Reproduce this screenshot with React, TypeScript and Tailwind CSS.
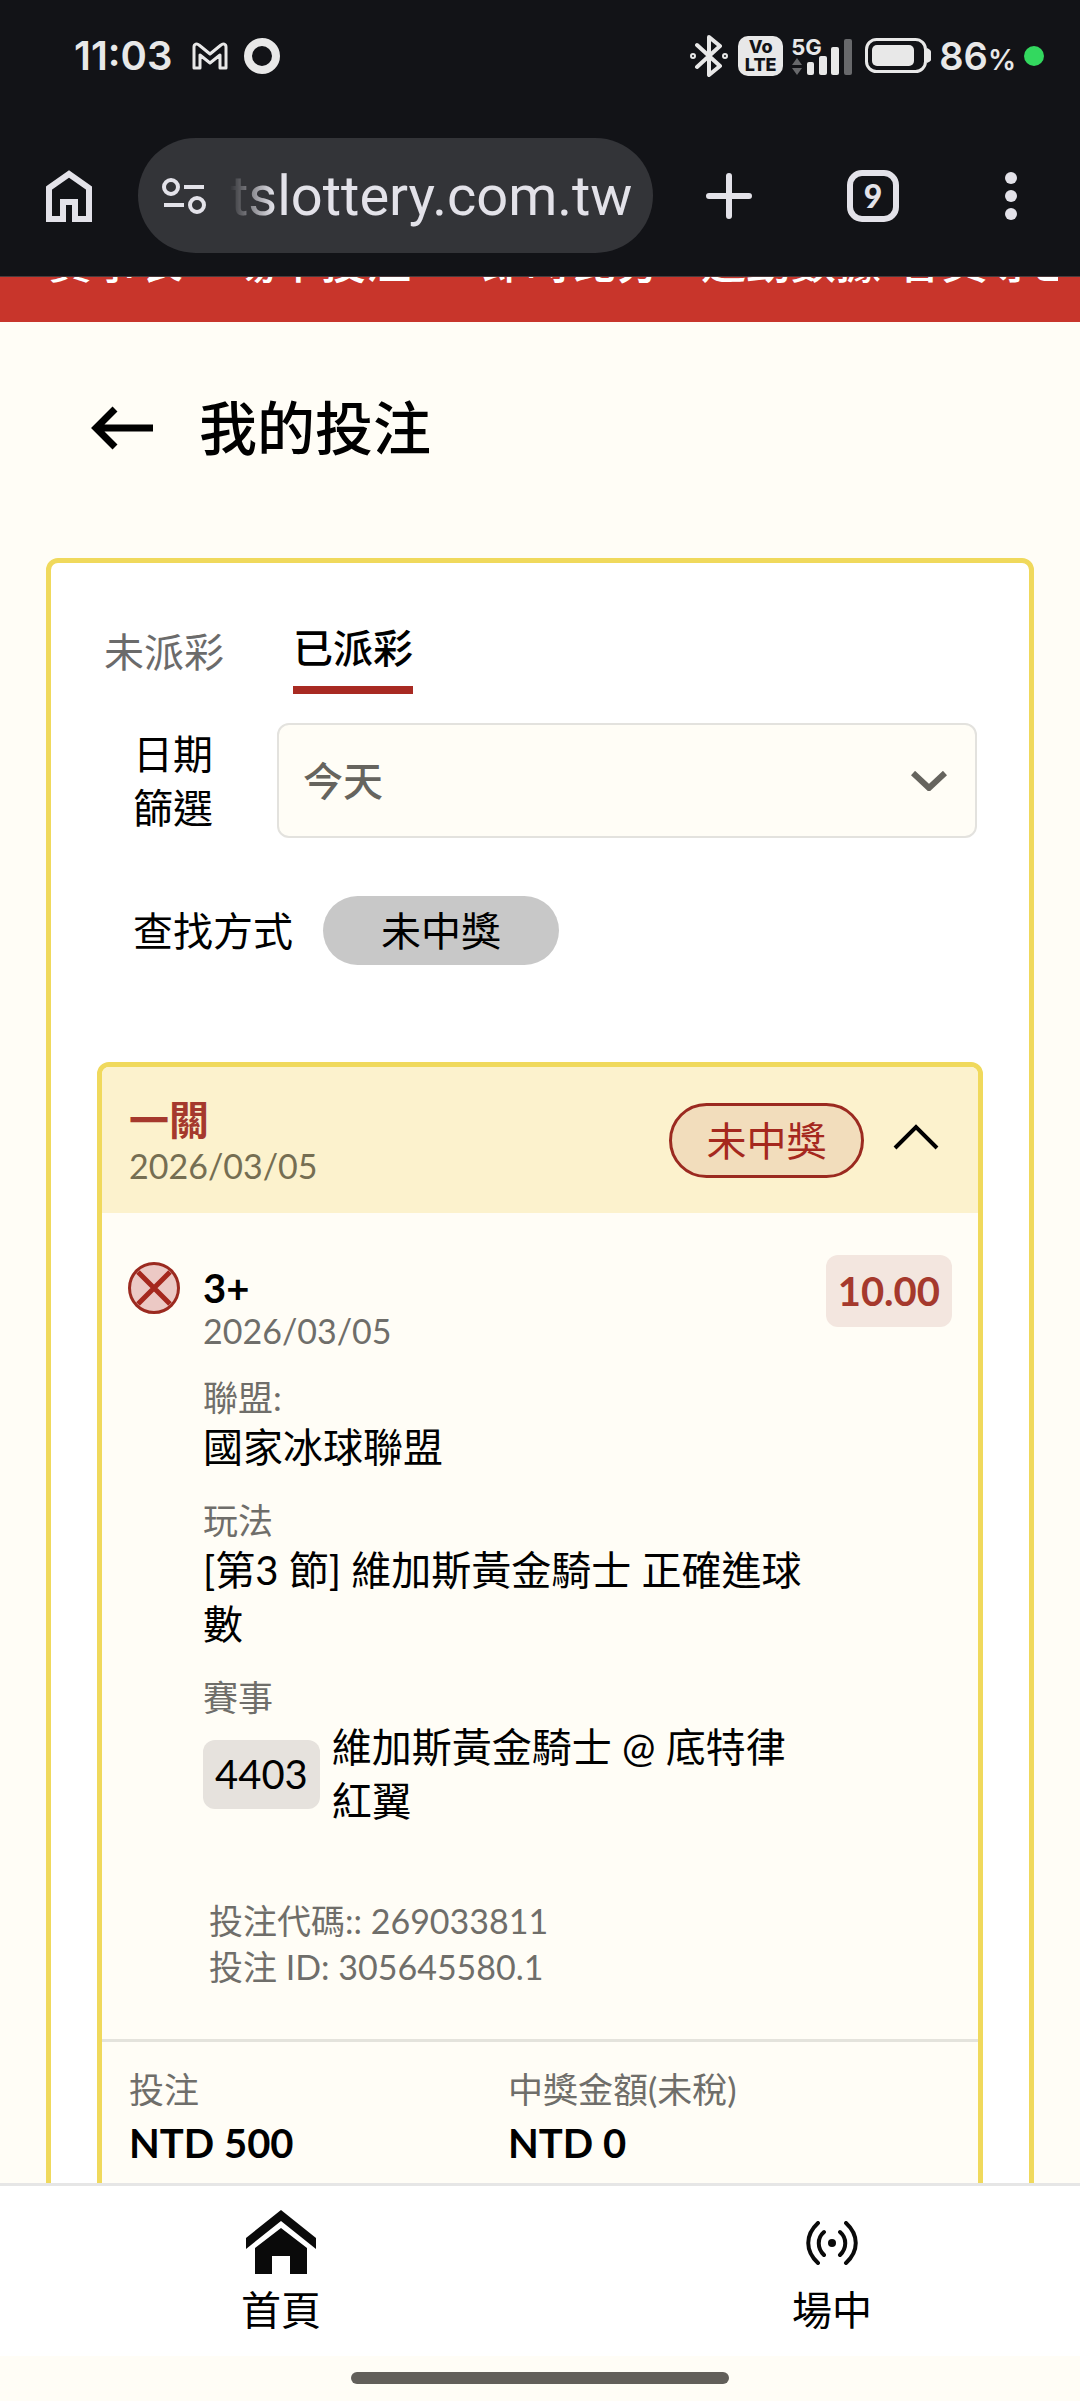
import { useState } from "react";
import type { ReactNode } from "react";

const navItems = [
  { label: "賽事表", space: "mr-12" },
  { label: "場中投注", space: "mr-[70px]" },
  { label: "即時比分", space: "mr-10" },
  { label: "運動數據", space: "mr-4" },
  { label: "會員專區", space: "mr-0" },
];

function StatusBar() {
  return (
    <div className="flex h-[112px] items-center justify-between pl-[74px] pr-9 font-['Inter',sans-serif] text-[#e8e8e8]">
      <div className="flex items-center">
        <span className="text-[40px] font-semibold leading-none">11:03</span>
        <svg className="ml-5 h-7 w-9" viewBox="0 0 36 28" fill="none" stroke="currentColor" strokeWidth="3" strokeLinejoin="round">
          <path d="M2 5c0-3 3-4 5-2l11 9 11-9c2-2 5-1 5 2v21h-6V13l-10 8-10-8v13H2z" />
        </svg>
        <span className="ml-4 size-9 rounded-full border-8 border-current" />
      </div>

      <div className="flex items-center">
        <svg className="h-[42px] w-[38px]" viewBox="0 0 38 42" fill="none" stroke="currentColor" strokeWidth="4" strokeLinejoin="round" strokeLinecap="round">
          <path d="M7 10l23 21-11 9V2l11 9L7 32" />
          <circle cx="3" cy="21" r="1" />
          <circle cx="35" cy="21" r="1" />
        </svg>
        <div className="ml-[10px] flex h-10 w-[45px] flex-col items-center justify-center rounded-[10px] bg-[#e8e8e8] text-[18px] font-extrabold leading-[18px] text-[#121317]">
          <span>Vo</span>
          <span>LTE</span>
        </div>
        <div className="relative ml-2 h-10 w-[62px]">
          <span className="absolute left-0 top-0 text-[22px] font-bold leading-none">5G</span>
          <svg className="h-10 w-[62px]" viewBox="0 0 62 40">
            <path d="M6 22l5 7H1zM6 39l5-7H1z" fill="#68696c" />
            <rect x="16" y="26" width="7" height="13" rx="2" fill="currentColor" />
            <rect x="28" y="20" width="8" height="19" rx="2" fill="currentColor" />
            <rect x="40" y="11" width="8" height="28" rx="2" fill="currentColor" />
            <rect x="53" y="3" width="8" height="36" rx="2" fill="#68696c" />
          </svg>
        </div>
        <svg className="ml-3 h-9 w-[66px]" viewBox="0 0 66 36">
          <rect x="1.500" y="1.500" width="59" height="32" rx="10" fill="none" stroke="currentColor" strokeWidth="3" />
          <rect x="7" y="7" width="42" height="21" rx="5" fill="currentColor" />
          <path d="M62 10c4 2 5 4 5 8s-1 5-5 7z" fill="currentColor" />
        </svg>
        <span className="ml-2 text-[38px] font-semibold leading-none">
          86<span className="text-[28px]">%</span>
        </span>
        <span className="ml-2 size-5 rounded-full bg-[#33d85f]" />
      </div>
    </div>
  );
}

function BrowserBar() {
  return (
    <div className="flex h-[164px] items-center pt-[3px] text-[#e3e2e9]">
      <button type="button" aria-label="Home" className="ml-[46px]">
        <svg className="h-[52px] w-[46px]" viewBox="0 0 46 52" fill="none" stroke="currentColor" strokeWidth="6">
          <path d="M3 18L23 4l20 14v31H29V32H17v17H3z" />
        </svg>
      </button>
      <div className="ml-[46px] flex h-[115px] min-w-0 flex-1 items-center rounded-full bg-[#333438] pl-6 pr-[22px]">
        <svg className="h-9 w-11 shrink-0" viewBox="0 0 44 36" fill="none" stroke="currentColor" strokeWidth="4">
          <circle cx="9" cy="9" r="7" />
          <path d="M22 9h20M2 27h20" />
          <circle cx="35" cy="27" r="7" />
        </svg>
        <input
          aria-label="Address"
          defaultValue="tslottery.com.tw"
          className="ml-6 h-20 w-full min-w-0 bg-transparent text-right font-['Roboto',sans-serif] text-[56px] outline-none [mask-image:linear-gradient(to_right,transparent,black_44px)]"
        />
      </div>
      <button type="button" aria-label="New tab" className="ml-[52px]">
        <svg className="size-12" viewBox="0 0 48 48" stroke="currentColor" strokeWidth="6" strokeLinecap="round">
          <path d="M24 4v40M4 24h40" />
        </svg>
      </button>
      <button type="button" aria-label="Tabs" className="ml-[94px] flex size-[52px] items-center justify-center rounded-[15px] border-6 border-current font-['Lato',sans-serif] text-[32px] font-black leading-none">
        9
      </button>
      <button type="button" aria-label="Menu" className="ml-[106px] mr-[63px]">
        <svg className="h-12 w-3" viewBox="0 0 12 48" fill="currentColor">
          <circle cx="6" cy="6" r="6" />
          <circle cx="6" cy="24" r="6" />
          <circle cx="6" cy="42" r="6" />
        </svg>
      </button>
    </div>
  );
}

function Field({ label, children }: { label: string; children: ReactNode }) {
  return (
    <div className="mb-[23px]">
      <dt className="text-[35px] leading-[46px] text-[#6f6e6a]">{label}</dt>
      <dd>{children}</dd>
    </div>
  );
}

function BetCard() {
  const [open, setOpen] = useState(true);

  return (
    <article className="overflow-hidden rounded-xl border-5 border-[#f0d95c] bg-[#fffdf6]">
      <header className="flex h-[146px] items-start justify-between bg-[#fcf2cd] pl-[27px] pr-[38px] pt-[30px]">
        <div>
          <h2 className="font-bold leading-[46px] text-[#a5392d]">一關</h2>
          <p className="text-[34px] leading-[46px] text-[#756e52]">2026/03/05</p>
        </div>
        <div className="flex items-center gap-7 pt-[6px]">
          <span className="flex h-[75px] w-[195px] items-center justify-center rounded-full border-3 border-[#9b2a20] bg-[#f2ddbc] text-[#a5281e]">
            未中獎
          </span>
          <button type="button" aria-label="Toggle details" onClick={() => setOpen(!open)}>
            <svg className="h-9 w-12" viewBox="0 0 48 36" fill="none" stroke="#000" strokeWidth="4">
              <path d="M3 25L24 4l21 21" />
            </svg>
          </button>
        </div>
      </header>

      {open && (
        <div className="flex items-start pl-[26px] pr-[26px] pt-[42px]">
          <svg className="mt-[7px] size-[52px] shrink-0" viewBox="0 0 52 52" fill="none">
            <circle cx="26" cy="26" r="24.500" fill="#ecc9c5" stroke="#9b2a20" strokeWidth="3" />
            <path d="M10 10l32 32M42 10L10 42" stroke="#a5281e" strokeWidth="5" />
          </svg>
          <div className="ml-[23px] min-w-0 flex-1 pt-[10px]">
            <h3 className="font-bold leading-[46px]">3+</h3>
            <p className="text-[34px] leading-[40px] text-[#6f6e6a]">2026/03/05</p>
            <dl className="mt-[23px]">
              <Field label="聯盟:">國家冰球聯盟</Field>
              <Field label="玩法">[第3 節] 維加斯黃金騎士 正確進球數</Field>
              <Field label="賽事">
                <div className="flex items-center gap-3">
                  <span className="flex h-[69px] items-center rounded-xl bg-[#e6e2dd] px-3">4403</span>
                  <span>維加斯黃金騎士 @ 底特律紅翼</span>
                </div>
              </Field>
            </dl>
            <div className="mb-[49px] mt-[70px] pl-[6px] text-[34px] leading-[46px] text-[#6f6e6a]">
              <p>投注代碼:: 269033811</p>
              <p>投注 ID: 305645580.1</p>
            </div>
          </div>
          <span className="ml-[14px] flex h-[72px] items-center rounded-xl bg-[#f3e6df] px-3 font-bold text-[#a5392d]">
            10.00
          </span>
        </div>
      )}

      <dl className="grid grid-cols-[379px_1fr] border-t-3 border-[#e4e3dc] pb-12 pl-[27px] pt-6">
        <div>
          <dt className="text-[35px] leading-[46px] text-[#6f6e6a]">投注</dt>
          <dd className="mt-1 font-bold">NTD 500</dd>
        </div>
        <div>
          <dt className="text-[35px] leading-[46px] text-[#6f6e6a]">中獎金額(未稅)</dt>
          <dd className="mt-1 font-bold">NTD 0</dd>
        </div>
      </dl>
    </article>
  );
}

function BottomNav() {
  return (
    <footer>
      <nav className="flex h-[173px] items-end justify-between border-t-3 border-[#e6e6e6] bg-white pb-[19px] pl-[241px] pr-[208px]">
        <a href="#home" className="flex w-20 flex-col items-center gap-[9px]">
          <svg className="h-16 w-[70px]" viewBox="0 0 70 64" fill="#0a0a0a">
            <path d="M35 0l35 28v11L35 11 0 39V28z" />
            <path d="M35 18l26 20v26H44V46H26v18H9V38z" />
          </svg>
          首頁
        </a>
        <a href="#live" className="flex w-20 flex-col items-center gap-[18px]">
          <svg className="h-11 w-[52px]" viewBox="0 0 52 44" fill="none" stroke="#0a0a0a" strokeWidth="4" strokeLinecap="round">
            <path d="M12 2C-1 14-1 30 12 42M40 2c13 12 13 28 0 40M18 11c-7 6-7 16 0 23M34 11c7 6 7 16 0 23" />
            <circle cx="26" cy="22" r="4" fill="#0a0a0a" stroke="none" />
          </svg>
          場中
        </a>
      </nav>
      <div className="flex h-[45px] justify-center pt-4">
        <div className="h-3 w-[35%] rounded-full bg-[#625f5a]" />
      </div>
    </footer>
  );
}

export default function App() {
  return (
    <div className="flex h-screen flex-col overflow-hidden bg-[#fffdf6] font-['Lato','Noto_Sans_CJK_TC',sans-serif] text-[40px] leading-[54px] text-black">
      <div className="relative z-10 shrink-0 border-b border-[#4a3a3c] bg-[#121317]">
        <StatusBar />
        <BrowserBar />
      </div>

      {/* the site menu is scrolled halfway under the browser bar */}
      <div className="-mt-[42px] shrink-0 bg-[#c8352b] pb-[33px] pl-12 pr-[22px]">
        <nav className="flex overflow-hidden whitespace-nowrap text-[45px] font-medium text-white">
          {navItems.map((item) => (
            <a key={item.label} href="#menu" className={item.space}>
              {item.label}
            </a>
          ))}
        </nav>
      </div>

      <main className="min-h-0 flex-1 overflow-hidden">
        <div className="flex items-center pb-[94px] pl-[91px] pt-[70px]">
          <button type="button" aria-label="Back">
            <svg className="h-11 w-[62px]" viewBox="0 0 62 44" fill="none" stroke="#000" strokeWidth="7">
              <path d="M62 22H6M24 3L5 22l19 19" />
            </svg>
          </button>
          <h1 className="ml-[46px] text-[58px] font-medium leading-[72px]">我的投注</h1>
        </div>

        <section className="mx-[46px] rounded-xl border-5 border-[#f0d95c] bg-white px-[46px] pt-[58px]">
          <div role="tablist" className="flex items-start gap-[69px] pl-[7px]">
            <button type="button" role="tab" aria-selected="false" className="pt-1 text-[#6b6b6b]">
              未派彩
            </button>
            <button type="button" role="tab" aria-selected="true" className="border-b-8 border-[#a82a22] pb-[11px] font-medium">
              已派彩
            </button>
          </div>

          <div className="mt-[29px] flex items-center pl-9">
            <label htmlFor="date" className="w-20 shrink-0">
              日期篩選
            </label>
            <div className="relative ml-16 mr-[6px] flex-1">
              <select id="date" className="h-[115px] w-full appearance-none rounded-xl border-2 border-[#e3e2de] bg-[#fffdf6] pl-6 font-medium text-[#66645e]">
                <option>今天</option>
              </select>
              <svg className="pointer-events-none absolute right-[30px] top-12 h-5 w-9" viewBox="0 0 36 20" fill="none" stroke="#66645e" strokeWidth="6">
                <path d="M2 2l16 15L34 2" />
              </svg>
            </div>
          </div>

          <div className="mb-[97px] mt-[58px] flex items-center pl-9">
            <span>查找方式</span>
            <button type="button" className="ml-[30px] h-[69px] rounded-full bg-[#c8c8c8] px-[58px]">
              未中獎
            </button>
          </div>

          <BetCard />
        </section>
      </main>

      <BottomNav />
    </div>
  );
}
